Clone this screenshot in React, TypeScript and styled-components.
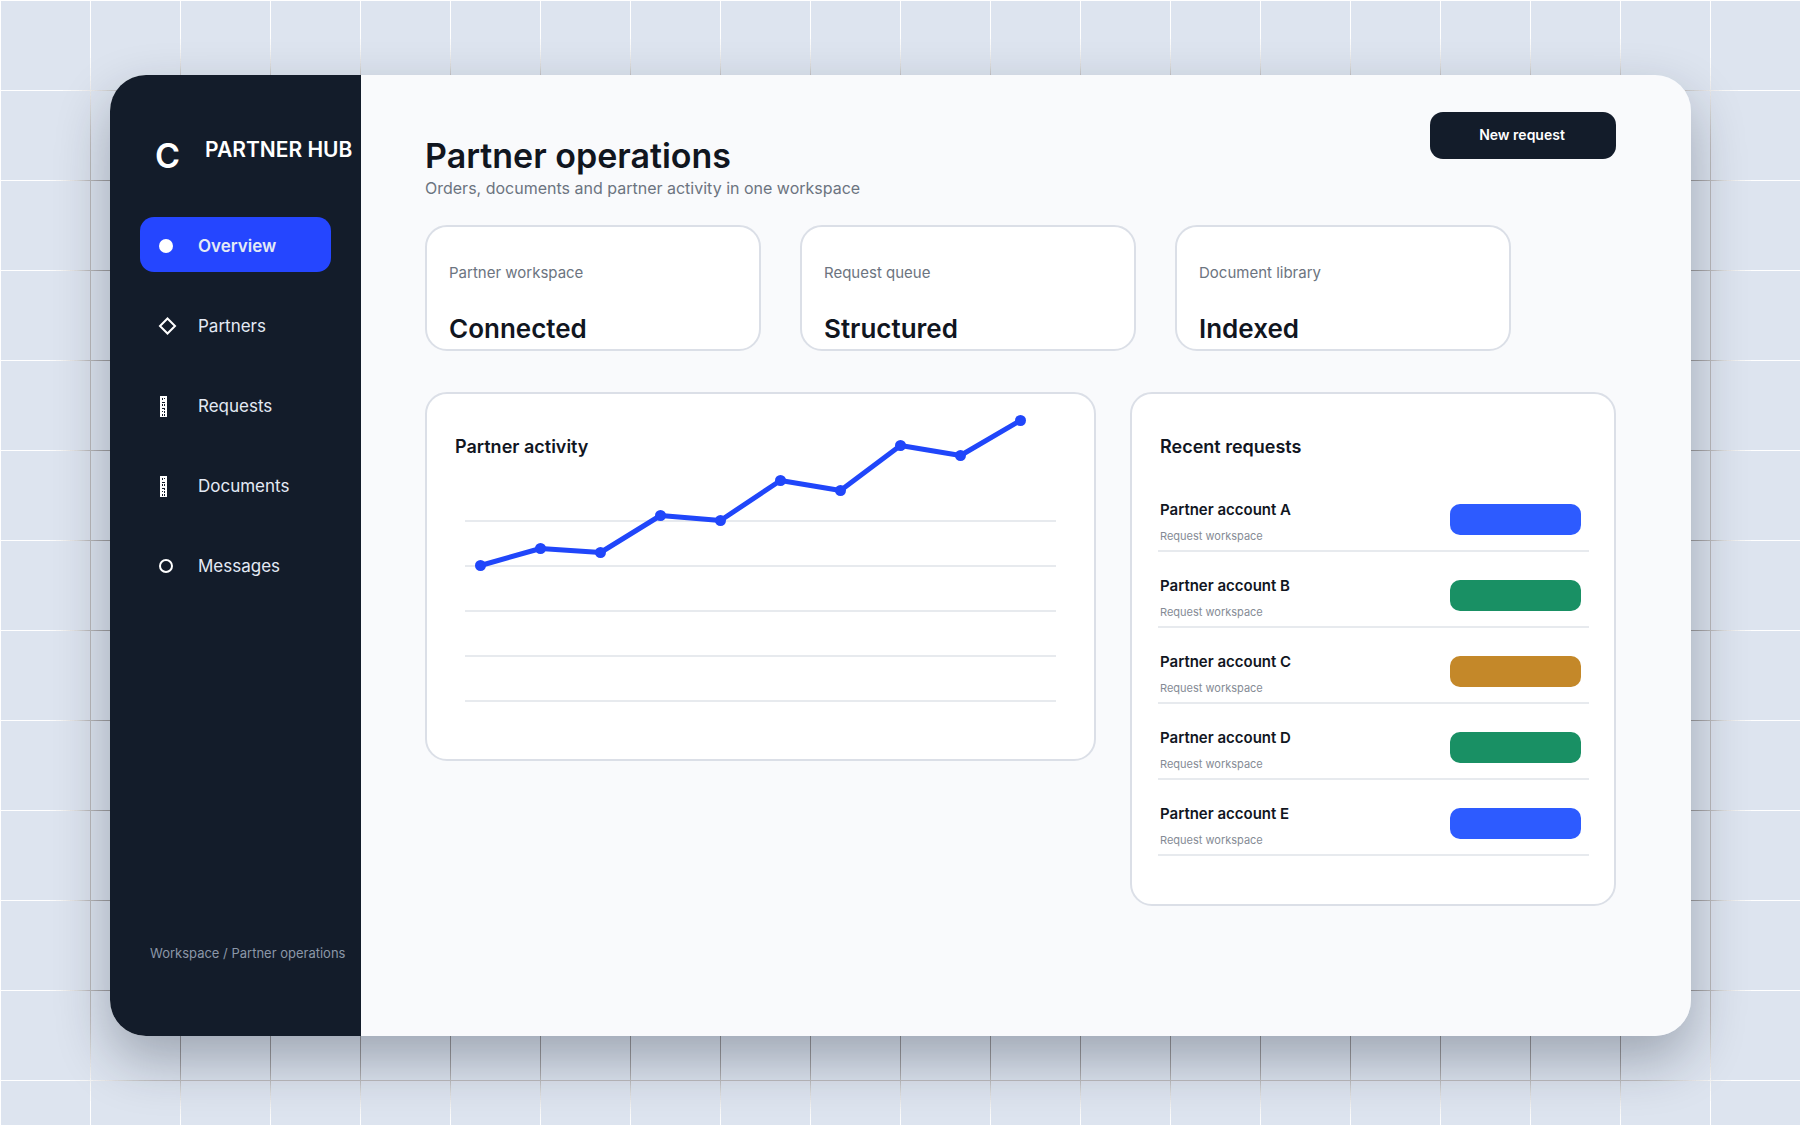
import React from "react";
import styled, { createGlobalStyle, css } from "styled-components";

const GlobalStyle = createGlobalStyle`
  *, *::before, *::after { box-sizing: border-box; }
  body {
    margin: 0;
    background: #dde4ef;
    color: #11161f;
    font-family: Inter, "Liberation Sans", sans-serif;
  }
  h1, h2, p, ul, dl, dd { margin: 0; padding: 0; }
  ul { list-style: none; }
`;

const gridLines = css`
  linear-gradient(#fff 1px, transparent 1px),
  linear-gradient(90deg, #fff 1px, transparent 1px)
`;

const frame = css`
  padding: 75px 109px 89px 110px;
  min-height: 100vh;
`;

const Backdrop = styled.div`
  ${frame}
  position: relative;
  display: flex;
  overflow: hidden;
  background-image: ${gridLines};
  background-size: 90px 90px;
`;

/* Grid lines turn grey where the window's shadow falls on them. */
const GridShade = styled.div`
  ${frame}
  position: absolute;
  inset: 0;
  display: flex;
  mask-image: ${gridLines};
  mask-size: 90px 90px;

  &::before {
    content: "";
    flex: 1;
    border-radius: 36px;
    box-shadow:
      0 24px 54px #969496,
      0 24px 54px #969496,
      0 24px 54px #969496,
      0 24px 54px #969496;
  }
`;

const WindowShadow = styled.div`
  position: relative;
  flex: 1;
  display: flex;
  min-width: 0;
  border-radius: 36px;
  box-shadow: 0 24px 54px rgba(18, 28, 46, 0.31);
`;

const Window = styled.div`
  flex: 1;
  display: grid;
  grid-template-columns: 251px 1fr;
  min-width: 0;
  border-radius: 36px;
  overflow: hidden;
  background: #f9fafc;
`;

const Sidebar = styled.aside`
  display: flex;
  flex-direction: column;
  padding: 58px 30px 73px;
  background: #131c2a;
`;

const Brand = styled.div`
  display: flex;
  align-items: flex-start;
  gap: 25px;
  height: 84px;
  padding-left: 15px;
  color: #fff;
  white-space: nowrap;
`;

const BrandMark = styled.span`
  font-size: 34px;
  font-weight: 600;
  line-height: 46px;
`;

const BrandName = styled.span`
  font-size: 21px;
  font-weight: 600;
  line-height: 34px;
`;

const NavList = styled.ul`
  display: grid;
  gap: 25px;
`;

const NavLink = styled.a<{ $active?: boolean }>`
  display: flex;
  align-items: center;
  gap: 20px;
  height: 55px;
  padding: 2px 18px 0;
  border-radius: 14px;
  background: ${(p) => (p.$active ? "#2546ff" : "transparent")};
  color: #e4eaf5;
  font-size: 17px;
  font-weight: ${(p) => (p.$active ? 600 : 400)};
  line-height: 24px;
  text-decoration: none;
`;

const NavIcon = styled.svg`
  width: 20px;
  height: 22px;
  fill: none;
  stroke: #fff;
  stroke-width: 2;
`;

const SidebarNote = styled.p`
  margin-top: auto;
  padding-left: 10px;
  color: #8b97a8;
  font-size: 13px;
  line-height: 20px;
  white-space: nowrap;
`;

const Main = styled.main`
  padding: 37px 75px 40px 64px;
  min-width: 0;
`;

const Header = styled.header`
  display: flex;
  justify-content: space-between;
  align-items: flex-start;
  height: 113px;
`;

const Heading = styled.div`
  padding-top: 22px;
`;

const Title = styled.h1`
  font-size: 34px;
  font-weight: 600;
  line-height: 44px;
`;

const Subtitle = styled.p`
  color: #6c7480;
  font-size: 16px;
  line-height: 20px;
`;

const PrimaryButton = styled.button`
  width: 186px;
  height: 47px;
  padding: 0 2px 2px 0;
  border: 0;
  border-radius: 13px;
  background: #131c2a;
  color: #fff;
  font: 600 14px/20px Inter, "Liberation Sans", sans-serif;
`;

const Card = styled.section`
  border: 2px solid #dbdfe7;
  border-radius: 22px;
  background: #fff;
`;

const Stats = styled.dl`
  display: grid;
  grid-template-columns: repeat(3, 336px);
  gap: 39px;
`;

const StatCard = styled(Card).attrs({ as: "div" })`
  height: 126px;
  padding: 35px 22px 0;
`;

const StatLabel = styled.dt`
  color: #6c7480;
  font-size: 15px;
  line-height: 22px;
`;

const StatValue = styled.dd`
  padding-top: 29px;
  font-size: 26px;
  font-weight: 600;
  line-height: 32px;
`;

const Panels = styled.div`
  display: grid;
  grid-template-columns: minmax(0, 671fr) minmax(0, 486fr);
  gap: 34px;
  align-items: start;
  padding-top: 41px;
`;

const RequestsPanel = styled(Card)`
  padding: 40px 25px 48px 26px;
`;

const ChartPanel = styled(Card)`
  display: grid;
  padding-bottom: 26px;
`;

const PanelTitle = styled.h2`
  padding-left: 2px;
  font-size: 18px;
  font-weight: 600;
  line-height: 26px;
`;

const ChartTitle = styled(PanelTitle)`
  grid-area: 1 / 1;
  padding: 40px 28px 0;
`;

const Chart = styled.svg`
  grid-area: 1 / 1;
  display: block;
  width: 100%;
  height: auto;
`;

const Requests = styled.ul`
  padding-top: 16px;
`;

const Request = styled.li`
  display: flex;
  justify-content: space-between;
  align-items: center;
  height: 76px;
  padding: 13px 8px 0 2px;
  border-bottom: 2px solid #e7eaee;
`;

const RequestText = styled.div`
  padding-top: 4px;
`;

const RequestName = styled.p`
  font-size: 15px;
  font-weight: 600;
  line-height: 22px;
`;

const RequestNote = styled.p`
  padding-top: 6px;
  color: #858b95;
  font-size: 11px;
  line-height: 18px;
`;

const Status = styled.span<{ $color: string }>`
  width: 131px;
  height: 31px;
  border-radius: 10px;
  background: ${(p) => p.$color};
`;

const sheet = (
  <g stroke="none" transform="translate(0 1)">
    <rect x="2" y="0" width="7" height="21" fill="#fff" />
    <path
      d="M4 2h1v2h-1zM6 2h1v1h-1zM4 6h3v1h-3zM4 8h1v2h-1zM6 8h1v2h-1zM4 12h3v1h-3zM6 13h1v1h-1zM4 15h1v1h-1zM6 15h1v2h-1zM4 18h1v2h-1zM6 18h1v2h-1z"
      fill="#131c2a"
    />
  </g>
);

const navItems = [
  { label: "Overview", active: true, icon: <circle cx="8" cy="11" r="7" fill="#fff" stroke="none" /> },
  { label: "Partners", icon: <path d="M9.500 3.500l7.500 7.500-7.500 7.500-7.500-7.500z" /> },
  { label: "Requests", icon: sheet },
  { label: "Documents", icon: sheet },
  { label: "Messages", icon: <circle cx="8" cy="11" r="6" /> },
];

const stats = [
  { label: "Partner workspace", value: "Connected" },
  { label: "Request queue", value: "Structured" },
  { label: "Document library", value: "Indexed" },
];

const points = [
  [53, 171], [113, 154], [173, 158], [233, 121], [293, 126],
  [353, 86], [413, 96], [473, 51], [533, 61], [593, 26],
];

const gridRows = [127, 172, 217, 262, 307];

const requests = [
  { name: "Partner account A", color: "#2d5bff" },
  { name: "Partner account B", color: "#199064" },
  { name: "Partner account C", color: "#c48829" },
  { name: "Partner account D", color: "#199064" },
  { name: "Partner account E", color: "#2d5bff" },
];

export default function App() {
  return (
    <Backdrop>
      <GlobalStyle />
      <GridShade aria-hidden="true" />
      <WindowShadow>
        <Window>
          <Sidebar>
            <Brand>
              <BrandMark>C</BrandMark>
              <BrandName>PARTNER HUB</BrandName>
            </Brand>
            <nav aria-label="Main">
              <NavList>
                {navItems.map((item) => (
                  <li key={item.label}>
                    <NavLink href="#" $active={item.active} aria-current={item.active ? "page" : undefined}>
                      <NavIcon viewBox="0 0 20 22" aria-hidden="true">{item.icon}</NavIcon>
                      {item.label}
                    </NavLink>
                  </li>
                ))}
              </NavList>
            </nav>
            <SidebarNote>Workspace / Partner operations</SidebarNote>
          </Sidebar>
          <Main>
            <Header>
              <Heading>
                <Title>Partner operations</Title>
                <Subtitle>Orders, documents and partner activity in one workspace</Subtitle>
              </Heading>
              <PrimaryButton type="button">New request</PrimaryButton>
            </Header>
            <Stats>
              {stats.map((stat) => (
                <StatCard key={stat.label}>
                  <StatLabel>{stat.label}</StatLabel>
                  <StatValue>{stat.value}</StatValue>
                </StatCard>
              ))}
            </Stats>
            <Panels>
              <ChartPanel>
                <ChartTitle>Partner activity</ChartTitle>
                <Chart viewBox="0 0 667 339" role="img" aria-label="Partner activity, rising over ten periods">
                  {gridRows.map((y) => (
                    <path key={y} d={`M38 ${y}H629`} stroke="#e7eaee" strokeWidth="2" />
                  ))}
                  <g transform="translate(0.5 0.5)">
                    <polyline
                      points={points.map((p) => p.join(",")).join(" ")}
                      fill="none"
                      stroke="#2046fa"
                      strokeWidth="5"
                      strokeLinejoin="round"
                    />
                    {points.map(([x, y]) => (
                      <circle key={x} cx={x} cy={y} r="5.500" fill="#2046fa" />
                    ))}
                  </g>
                </Chart>
              </ChartPanel>
              <RequestsPanel>
                <PanelTitle>Recent requests</PanelTitle>
                <Requests>
                  {requests.map((request) => (
                    <Request key={request.name}>
                      <RequestText>
                        <RequestName>{request.name}</RequestName>
                        <RequestNote>Request workspace</RequestNote>
                      </RequestText>
                      <Status $color={request.color} />
                    </Request>
                  ))}
                </Requests>
              </RequestsPanel>
            </Panels>
          </Main>
        </Window>
      </WindowShadow>
    </Backdrop>
  );
}
